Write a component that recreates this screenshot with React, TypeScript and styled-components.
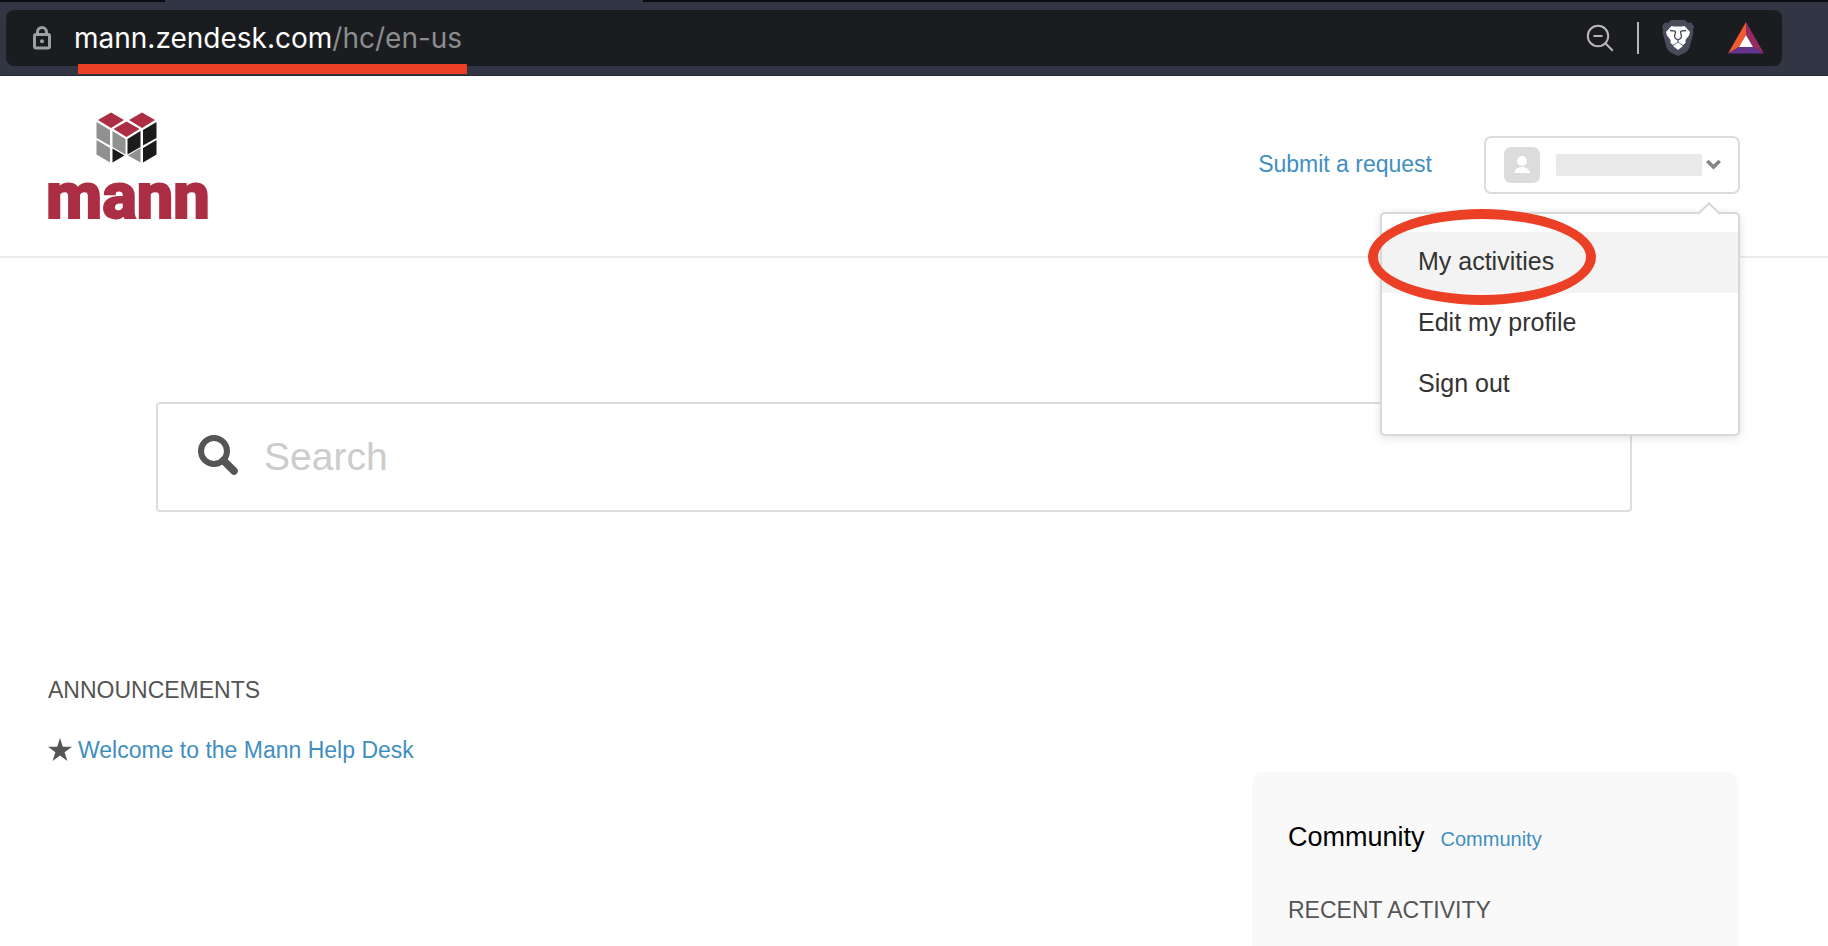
import React from "react";
import styled, { createGlobalStyle } from "styled-components";

const GlobalStyle = createGlobalStyle`
  * { box-sizing: border-box; }
  html, body { margin: 0; background: #fff; }
  body { font-family: "Liberation Sans", Arial, sans-serif; color: #555; font-size: 23px; }
  a { color: #418fc0; text-decoration: none; }
`;

const Page = styled.div`
  display: flex;
  flex-direction: column;
  min-height: 100vh;
`;

const BrowserBar = styled.div`
  display: flex;
  flex-direction: column;
  height: 76px;
  background: #323544;
  border-bottom: 1px solid #272937;
`;

const TabStrip = styled.div`
  display: flex;
  justify-content: space-between;
  height: 2px;
  margin-bottom: 8px;
`;

const InactiveTabs = styled.div<{ $share: string }>`
  width: ${(p) => p.$share};
  background: #0b0b14;
`;

const AddressBar = styled.div`
  display: flex;
  align-items: center;
  height: 56px;
  margin: 0 46px 0 6px;
  padding: 0 18px 0 26px;
  border-radius: 8px;
  background: #1b1c20;
`;

const Address = styled.div`
  position: relative;
  flex: 1;
  margin-left: 22px;
  font-family: Inter, sans-serif;
  font-size: 28px;
  line-height: 32px;
  color: #8b8c8f;
`;

const Host = styled.span`
  color: #fff;
`;

const Underline = styled.div`
  position: absolute;
  left: 4px;
  top: 42px;
  width: 389px;
  height: 10px;
  background: #ec4026;
`;

const BarButton = styled.button`
  display: flex;
  padding: 0;
  border: 0;
  background: none;
`;

const BarTools = styled.div`
  display: flex;
  align-items: center;
  gap: 34px;
`;

const ToolGroup = styled.div`
  display: flex;
  align-items: center;
  gap: 23px;
`;

const Divider = styled.div`
  width: 2px;
  height: 32px;
  background: #b7b8b6;
`;

const Header = styled.header`
  display: flex;
  align-items: flex-start;
  justify-content: space-between;
  height: 182px;
  padding: 36px 88px 0 40px;
  border-bottom: 2px solid #ececec;
`;

const Brand = styled.a`
  display: flex;
`;

const Nav = styled.nav`
  display: flex;
  align-items: center;
  gap: 52px;
  margin-top: 24px;
`;

const RequestLink = styled.a`
  padding-bottom: 2px;
`;

const Account = styled.div`
  position: relative;
`;

const AccountButton = styled.button`
  display: flex;
  align-items: center;
  width: 256px;
  height: 58px;
  padding: 0 17px 0 18px;
  border: 2px solid #dcdcdc;
  border-radius: 7px;
  background: #fff;
`;

const HiddenName = styled.span`
  flex: 1;
  height: 22px;
  margin: 0 4px 0 16px;
  border-radius: 2px;
  background: #e9e9e9;
`;

const Menu = styled.div`
  position: absolute;
  z-index: 2;
  top: 76px;
  right: 0;
  width: 360px;
  padding: 18px 0 19px;
  border: 2px solid #d8d8d8;
  border-radius: 5px;
  background: #fff;
  box-shadow: 0 2px 10px rgba(0, 0, 0, 0.12);
`;

const MenuCaret = styled.svg`
  position: absolute;
  top: -12px;
  right: 17px;
`;

const MenuItem = styled.a<{ $active?: boolean }>`
  display: block;
  padding: 0 36px 2px;
  font-size: 25px;
  line-height: 59px;
  color: #333;
  background: ${(p) => (p.$active ? "#f3f3f3" : "transparent")};
`;

const Ring = styled.div`
  position: absolute;
  top: -5px;
  left: -14px;
  width: 228px;
  height: 96px;
  border: 10px solid #ec4026;
  border-radius: 50%;
`;

const Main = styled.main`
  display: flex;
  flex: 1;
  flex-direction: column;
  padding: 144px 88px 0 48px;
`;

const SearchForm = styled.form`
  display: flex;
  align-items: center;
  height: 110px;
  margin: 0 108px;
  padding: 0 40px;
  border: 2px solid #dedede;
  border-radius: 4px;
`;

const SearchInput = styled.input`
  flex: 1;
  min-width: 0;
  margin-left: 25px;
  padding: 0;
  border: 0;
  outline: 0;
  background: none;
  font-family: inherit;
  font-size: 39px;
  color: #555;
  &::placeholder { color: #ccc; opacity: 1; }
`;

const Announcements = styled.section`
  padding: 162px 0 6px;
`;

const SectionTitle = styled.h2`
  margin: 0;
  font-size: 23px;
  line-height: 32px;
  font-weight: 400;
  text-transform: uppercase;
`;

const Article = styled.div`
  display: flex;
  align-items: center;
  gap: 6px;
  margin-top: 28px;
  line-height: 32px;
`;

const CommunityCard = styled.aside`
  flex: 1;
  align-self: flex-end;
  width: 486px;
  margin-right: 2px;
  padding: 47px 36px 0;
  border-radius: 10px 10px 0 0;
  background: #f9f9f9;
`;

const CommunityHead = styled.div`
  display: flex;
  align-items: baseline;
  gap: 16px;
  margin-bottom: 39px;
`;

const CommunityTitle = styled.h2`
  margin: 0;
  font-size: 27px;
  line-height: 36px;
  font-weight: 400;
  color: #000;
`;

const CommunityLink = styled.a`
  font-size: 20px;
`;

const Lock = () => (
  <svg width="20" height="24" viewBox="0 0 20 24" fill="none" stroke="#9aa0a4" strokeWidth="3">
    <rect x="2.5" y="8.5" width="15" height="13.5" rx="1.5" />
    <path d="M5.5 8V6a4.5 4.5 0 0 1 9 0v2" />
    <circle cx="10" cy="15.3" r="2" fill="#9aa0a4" stroke="none" />
  </svg>
);

const ZoomOut = () => (
  <svg width="28" height="28" viewBox="0 0 28 28" fill="none" stroke="#b7b8b6" strokeWidth="2">
    <circle cx="12" cy="12" r="10.2" />
    <path d="M7.5 12h9M19.3 19.3l7.5 7.5" />
  </svg>
);

const Lion = () => (
  <svg width="32" height="36" viewBox="0 0 32 36">
    <path d="M9 0h14l3 3 3-.5 3 4-1 3 .5 3-4 15q-1 3-4 5L16 36l-7.500-3.500q-3-2-4-5L.5 12.500 1 9.500 0 6.500l3-4L6 3Z" fill="#4a4b5b" />
    <path d="M9.500 6 12 6.500h8l2.500-.5 5.500 6-1 3.500-3.500 4.500 0 3-2.500 2-5-3-5 3-2.500-2 0-3L5 15.500 4 12Z" fill="#fff" />
    <path d="m16 22.500 5 3.500-5 4-5-4Z" fill="#fff" />
    <path d="m8 10.500 5 .5.500 1-1 4.500 1 2 2.500 1.500 2.500-1.500 1-2-1-4.500.5-1 5-.5M16 20v2.500" fill="none" stroke="#4a4b5b" strokeWidth="1.300" />
  </svg>
);

const Rewards = () => (
  <svg width="36" height="32" viewBox="0 0 36 32">
    <path d="M18 0 0 31.500 11 25l7-12Z" fill="#f15a2e" />
    <path d="M18 0v13l7 12 11 6.500Z" fill="#962b63" />
    <path d="M0 31.500h36L25 25H11Z" fill="#65348f" />
    <path d="m18 13 7 12H11Z" fill="#fff" />
  </svg>
);

const Logo = () => (
  <svg width="184" height="136" viewBox="-8 0 184 136" role="img" aria-label="mann">
    <g fill="#ab2e44">
      <path d="m63 .5 13 7.500-13 8-13-8Z" />
      <path d="m94 .5 13 7.500-13 8-13-8Z" />
      <path d="m78.500 9.500 13 7.500-13 8-13-8Z" />
    </g>
    <g fill="#90908e">
      <path d="m48.500 10 13.500 8v15.500l-13.500-7.500Z" />
      <path d="m48.500 28 13.500 8v14.500l-13.500-8Z" />
      <path d="m64.500 19 13 8v15.500l-13-7.500Z" />
      <path d="M92.500 36v14.500L80 43.500Z" />
    </g>
    <g fill="#1b1b1b">
      <path d="m79.500 27 13-8v16l-13 7.500Z" />
      <path d="m95 18 13.500-8v16L95 33.500Z" />
      <path d="m95 36 13.500-8v14.500L95 50.500Z" />
      <path d="m64.500 36.500 12 7-12 7Z" />
    </g>
    <text x="-2" y="106" fill="#ab2e44" stroke="#ab2e44" strokeWidth="2" fontFamily="Roboto, sans-serif" fontWeight="800" fontSize="65">mann</text>
  </svg>
);

const Avatar = () => (
  <svg width="36" height="36" viewBox="0 0 36 36">
    <rect width="36" height="36" rx="7" fill="#dcdcdc" />
    <circle cx="18" cy="14" r="5" fill="#fff" />
    <path d="M10 26q1.500-6 8-6t8 6Z" fill="#fff" />
  </svg>
);

const Chevron = () => (
  <svg width="15" height="13" viewBox="0 0 15 13" fill="none" stroke="#858585" strokeWidth="3.600">
    <path d="m1.300 2 6.200 6 6.200-6" />
  </svg>
);

const SearchIcon = () => (
  <svg width="41" height="45" viewBox="0 0 41 45" fill="none" stroke="#555">
    <circle cx="16" cy="16" r="13" strokeWidth="6" />
    <path d="m25.500 25.500 10.500 10.500" strokeWidth="7.500" strokeLinecap="round" />
  </svg>
);

const Star = () => (
  <svg width="24" height="24" viewBox="0 0 24 24">
    <path d="m12 0 2.800 8.700H24l-7.400 5.500 2.800 8.800-7.400-5.400L4.600 23l2.800-8.800L0 8.700h9.200Z" fill="#555" />
  </svg>
);

export default function App() {
  return (
    <Page>
      <GlobalStyle />
      <BrowserBar>
        <TabStrip>
          <InactiveTabs $share="9%" />
          <InactiveTabs $share="64.8%" />
        </TabStrip>
        <AddressBar>
          <Lock />
          <Address>
            <Host>mann.zendesk.com</Host>/hc/en-us
            <Underline />
          </Address>
          <BarTools>
            <ToolGroup>
              <BarButton aria-label="Zoom out"><ZoomOut /></BarButton>
              <Divider />
              <BarButton aria-label="Shields"><Lion /></BarButton>
            </ToolGroup>
            <BarButton aria-label="Rewards"><Rewards /></BarButton>
          </BarTools>
        </AddressBar>
      </BrowserBar>
      <Header>
        <Brand href="#home"><Logo /></Brand>
        <Nav>
          <RequestLink href="#request">Submit a request</RequestLink>
          <Account>
            <AccountButton aria-label="Account" aria-expanded="true">
              <Avatar />
              <HiddenName />
              <Chevron />
            </AccountButton>
            <Menu>
              <MenuCaret width="24" height="14" viewBox="0 0 24 14">
                <path d="M0 14 12 1.500 24 14Z" fill="#fff" />
                <path d="M1 12 12 1.500 23 12" fill="none" stroke="#d8d8d8" strokeWidth="2" />
              </MenuCaret>
              <MenuItem href="#activities" $active>My activities</MenuItem>
              <MenuItem href="#profile">Edit my profile</MenuItem>
              <MenuItem href="#signout">Sign out</MenuItem>
              <Ring />
            </Menu>
          </Account>
        </Nav>
      </Header>
      <Main>
        <SearchForm role="search">
          <SearchIcon />
          <SearchInput type="text" placeholder="Search" aria-label="Search" />
        </SearchForm>
        <Announcements>
          <SectionTitle>Announcements</SectionTitle>
          <Article>
            <Star />
            <a href="#welcome">Welcome to the Mann Help Desk</a>
          </Article>
        </Announcements>
        <CommunityCard>
          <CommunityHead>
            <CommunityTitle>Community</CommunityTitle>
            <CommunityLink href="#community">Community</CommunityLink>
          </CommunityHead>
          <SectionTitle>Recent activity</SectionTitle>
        </CommunityCard>
      </Main>
    </Page>
  );
}
